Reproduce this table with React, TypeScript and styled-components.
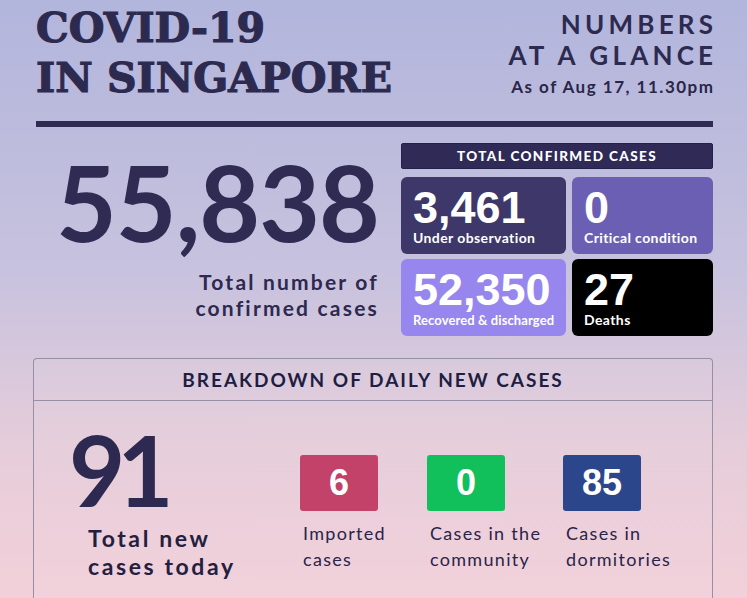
import React from "react";
import styled, { createGlobalStyle } from "styled-components";

const GlobalStyle = createGlobalStyle`
  html, body {
    margin: 0;
    padding: 0;
  }
  body {
    min-height: 598px;
    background: linear-gradient(180deg, #b2b5dc 0%, #c7c2de 45%, #e6cdda 75%, #f2d0d9 100%);
    font-family: Lato, "Noto Sans", sans-serif;
    color: #2d2950;
  }
`;

const Page = styled.div`
  padding: 3px 34px 0 36px;
  overflow: hidden;
  height: 595px;
`;

const Header = styled.header`
  display: flex;
  justify-content: space-between;
  align-items: flex-start;
`;

const Title = styled.h1`
  margin: 0;
  font-family: "DejaVu Serif", "Liberation Serif", serif;
  font-weight: 700;
  font-size: 41px;
  line-height: 50px;
  letter-spacing: 0;
  color: #2d2a50;
  -webkit-text-stroke: 1.2px #2d2a50;
`;

const Glance = styled.div`
  padding-top: 6px;
  text-align: right;
`;

const GlanceTitle = styled.div`
  font-weight: 700;
  font-size: 26px;
  line-height: 31px;
  letter-spacing: 4.2px;
  margin-right: -4.2px;
  color: #2d2a50;
`;

const AsOf = styled.div`
  margin-top: 6px;
  font-weight: 700;
  font-size: 17px;
  line-height: 20px;
  letter-spacing: 1.5px;
  margin-right: -1.5px;
  color: #2a2648;
`;

const Rule = styled.div`
  margin-top: 18px;
  height: 6px;
  background: #2e2a52;
`;

const Summary = styled.section`
  margin-top: 16px;
  display: flex;
  gap: 22px;
`;

const TotalSide = styled.div`
  flex: 1;
  display: flex;
  flex-direction: column;
  align-items: flex-end;
`;

const BigNumber = styled.div`
  margin-top: 6px;
  font-size: 105px;
  line-height: 1;
  font-weight: 700;
  letter-spacing: -1px;
  color: #2f2b53;
`;

const Caption = styled.div`
  margin-top: 15px;
  text-align: right;
  font-weight: 700;
  font-size: 21px;
  line-height: 26px;
  letter-spacing: 2.2px;
  color: #2d2950;
`;

const Confirmed = styled.div`
  width: 312px;
  display: flex;
  flex-direction: column;
  gap: 8px;
`;

const Banner = styled.div`
  height: 26px;
  border-radius: 2px;
  background: #2f2a56;
  border: 1px solid #24204a;
  box-sizing: border-box;
  color: #fff;
  font-weight: 900;
  font-size: 13.5px;
  letter-spacing: 1.4px;
  display: flex;
  align-items: center;
  justify-content: center;
`;

const TileGrid = styled.div`
  display: grid;
  grid-template-columns: 165px 141px;
  grid-auto-rows: 77px;
  gap: 5px 6px;
`;

const Tile = styled.div<{ $bg: string }>`
  background: ${(p) => p.$bg};
  border-radius: 6px;
  padding: 9px 11px 0 12px;
  color: #fff;
  box-sizing: border-box;
`;

const TileNumber = styled.div`
  font-family: "Liberation Sans", Arial, sans-serif;
  font-weight: 700;
  font-size: 45px;
  line-height: 44px;
`;

const TileLabel = styled.div<{ $size?: number; $spacing?: number }>`
  font-weight: 700;
  font-size: ${(p) => p.$size ?? 14}px;
  line-height: 16px;
  letter-spacing: ${(p) => p.$spacing ?? 0.4}px;
  white-space: nowrap;
`;

const Breakdown = styled.section`
  margin: 22px 0 0 -3px;
  border: 1px solid #978fa6;
  border-bottom: none;
  border-radius: 4px 4px 0 0;
  background: rgba(255, 255, 255, 0.04);
  height: 300px;
`;

const BreakdownHead = styled.div`
  height: 41px;
  border-bottom: 1px solid #978fa6;
  display: flex;
  align-items: center;
  justify-content: center;
  font-weight: 700;
  font-size: 19px;
  letter-spacing: 2px;
  color: #201d42;
`;

const BreakdownBody = styled.div`
  display: flex;
  align-items: flex-start;
  padding: 20px 0 0 35px;
`;

const TodayBlock = styled.div`
  width: 231px;
`;

const TodayNumber = styled.div`
  font-weight: 700;
  font-size: 97px;
  line-height: 1;
  letter-spacing: -8px;
  color: #2d2950;
`;

const TodayCaption = styled.div`
  margin: 6px 0 0 19px;
  font-weight: 700;
  font-size: 23px;
  line-height: 28px;
  letter-spacing: 2.6px;
  color: #23203f;
`;

const SplitItem = styled.div<{ $width?: number }>`
  width: ${(p) => (p.$width ? `${p.$width}px` : "auto")};
  margin-top: 34px;
`;

const SplitBox = styled.div<{ $bg: string }>`
  width: 78px;
  height: 56px;
  border-radius: 3px;
  background: ${(p) => p.$bg};
  color: #fff;
  font-family: "Liberation Sans", Arial, sans-serif;
  font-weight: 700;
  font-size: 36px;
  display: flex;
  align-items: center;
  justify-content: center;
`;

const SplitLabel = styled.div`
  margin: 9px 0 0 3px;
  font-size: 18px;
  line-height: 26px;
  letter-spacing: 1.3px;
  color: #28244a;
`;

const tiles = [
  { value: "3,461", label: "Under observation", bg: "#3e3769" },
  { value: "0", label: "Critical condition", bg: "#6b5fb4" },
  { value: "52,350", label: "Recovered & discharged", bg: "#9686ee", size: 13, spacing: 0.1 },
  { value: "27", label: "Deaths", bg: "#000000" },
];

const splits = [
  { value: "6", label: ["Imported", "cases"], bg: "#c2426a", width: 127 },
  { value: "0", label: ["Cases in the", "community"], bg: "#11c05a", width: 136 },
  { value: "85", label: ["Cases in", "dormitories"], bg: "#2b468b" },
];

export default function App() {
  return (
    <>
      <GlobalStyle />
      <Page>
        <Header>
          <Title>
            COVID-19
            <br />
            IN SINGAPORE
          </Title>
          <Glance>
            <GlanceTitle>NUMBERS</GlanceTitle>
            <GlanceTitle>AT A GLANCE</GlanceTitle>
            <AsOf>As of Aug 17, 11.30pm</AsOf>
          </Glance>
        </Header>
        <Rule />
        <Summary>
          <TotalSide>
            <BigNumber>55,838</BigNumber>
            <Caption>
              Total number of
              <br />
              confirmed cases
            </Caption>
          </TotalSide>
          <Confirmed>
            <Banner>TOTAL CONFIRMED CASES</Banner>
            <TileGrid>
              {tiles.map((t) => (
                <Tile key={t.label} $bg={t.bg}>
                  <TileNumber>{t.value}</TileNumber>
                  <TileLabel $size={t.size} $spacing={t.spacing}>
                    {t.label}
                  </TileLabel>
                </Tile>
              ))}
            </TileGrid>
          </Confirmed>
        </Summary>
        <Breakdown>
          <BreakdownHead>BREAKDOWN OF DAILY NEW CASES</BreakdownHead>
          <BreakdownBody>
            <TodayBlock>
              <TodayNumber>91</TodayNumber>
              <TodayCaption>
                Total new
                <br />
                cases today
              </TodayCaption>
            </TodayBlock>
            {splits.map((s) => (
              <SplitItem key={s.bg} $width={s.width}>
                <SplitBox $bg={s.bg}>{s.value}</SplitBox>
                <SplitLabel>
                  {s.label[0]}
                  <br />
                  {s.label[1]}
                </SplitLabel>
              </SplitItem>
            ))}
          </BreakdownBody>
        </Breakdown>
      </Page>
    </>
  );
}
